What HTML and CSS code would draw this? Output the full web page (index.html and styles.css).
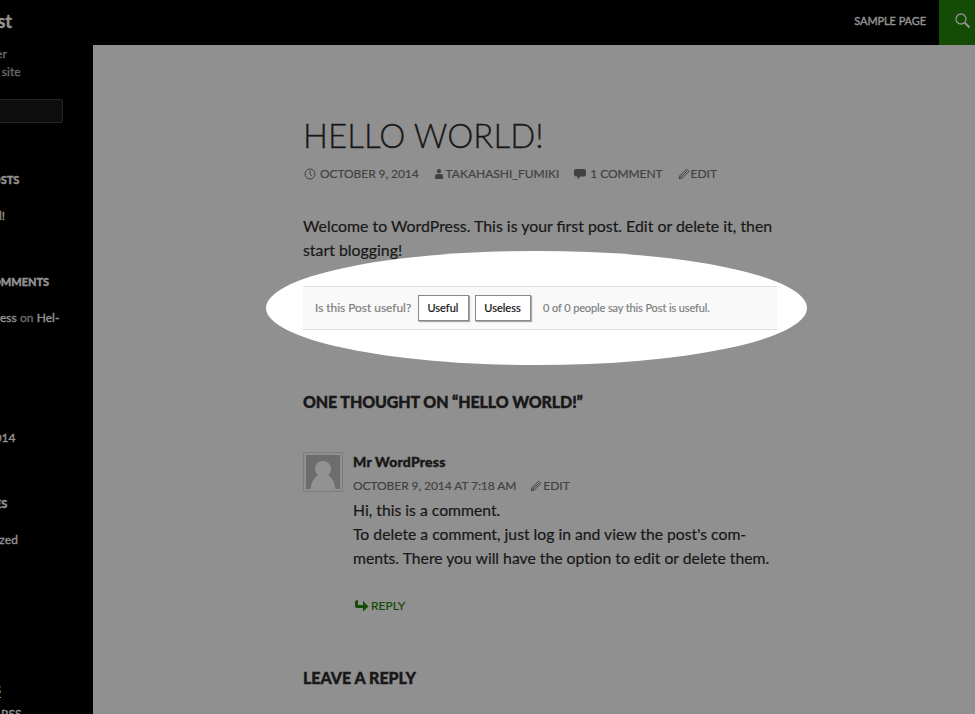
FILE: index.html
```html
<!DOCTYPE html>
<html lang="en">
<head>
<meta charset="utf-8">
<title>Hello world!</title>
<link rel="stylesheet" href="styles.css">
</head>
<body>
<svg class="symbols" aria-hidden="true">
  <symbol id="pencil" viewBox="0 0 12 12"><path d="M1.2 10.8 2 7.7 7.8 1.8q.9-.9 1.8 0l.6.6q.9.9 0 1.8L4.4 10z M2 7.7 4.3 10 M3.5 8.5 8.9 3.1" fill="none" stroke="currentColor" stroke-width="1"/></symbol>
</svg>
<header class="topbar">
  <h1 class="site-title">WP Test</h1>
  <nav class="nav"><a>Sample Page</a></nav>
  <div class="search-toggle"><svg width="16" height="16" viewBox="0 0 16 16"><circle cx="6" cy="6" r="5" fill="none" stroke="currentColor" stroke-width="1.3"/><path d="m9.8 9.8 4.7 4.7" stroke="currentColor" stroke-width="2.1"/></svg></div>
</header>
<div class="page">
  <aside class="sidebar">
    <p class="tagline">Just another WordPress site</p>
    <div class="searchbox"></div>
    <section class="widget posts"><h2>Recent Posts</h2><p>Hello world!</p></section>
    <section class="widget comments"><h2>Recent Comments</h2><p>Mr WordPress <span>on</span> Hel-</p></section>
    <section class="widget archives"><p>October 2014</p></section>
    <section class="widget categories"><h2>Categories</h2><p>Uncategorized</p></section>
    <section class="widget feeds"><p>Entries <abbr>RSS</abbr></p><p>Comments <abbr>RSS</abbr></p></section>
  </aside>
  <main class="content">
    <div class="spotlight"></div>
    <article class="post">
      <h1 class="title">Hello world!</h1>
      <div class="meta">
        <span class="date"><svg width="12" height="12" viewBox="0 0 12 12"><circle cx="6" cy="6" r="5" fill="none" stroke="currentColor"/><path d="M6 2.5V6l2 2" fill="none" stroke="currentColor"/></svg>October 9, 2014</span>
        <span class="author"><svg width="8" height="10" viewBox="0 0 8 10"><circle cx="4" cy="2.2" r="2.1" fill="currentColor"/><path d="M0 10V7.2Q0 5 2 5h4q2 0 2 2.2V10z" fill="currentColor"/></svg>takahashi_fumiki</span>
        <span class="count"><svg width="12" height="11" viewBox="0 0 12 11"><path d="M2 0h8q2 0 2 2v3.5q0 2-2 2H6.5L3.5 10.5v-3H2q-2 0-2-2V2q0-2 2-2z" fill="currentColor"/></svg>1 Comment</span>
        <span class="edit"><svg width="12" height="12"><use href="#pencil"/></svg>Edit</span>
      </div>
      <p class="body">Welcome to WordPress. This is your first post. Edit or delete it, then<br>start blogging!</p>
      <div class="feedback">
        <span class="question">Is this Post useful?</span>
        <button>Useful</button><button>Useless</button>
        <span class="result">0 of 0 people say this Post is useful.</span>
      </div>
    </article>
    <section class="discussion">
      <h2>One thought on “Hello world!”</h2>
      <div class="comment">
        <div class="avatar"><svg width="34" height="34" viewBox="0 0 34 34"><rect width="34" height="34" fill="#6d6d6d"/><circle cx="17" cy="14" r="8" fill="#929292"/><path d="M4.5 34C5.5 26 9 21 13 20h8c4 1 7.5 6 8.5 14z" fill="#929292"/></svg></div>
        <div class="comment-main">
          <div class="name">Mr WordPress</div>
          <div class="meta comment-meta"><span>October 9, 2014 at 7:18 am</span><span class="edit"><svg width="12" height="12"><use href="#pencil"/></svg>Edit</span></div>
          <p class="comment-text">Hi, this is a comment.<br>To delete a comment, just log in and view the post's com-<br>ments. There you will have the option to edit or delete them.</p>
          <div class="reply"><svg width="14" height="12" viewBox="0 0 14 12"><path d="M0 1 3 0v5h5V1l5.5 5.5L8 11.5V8H2Q0 8 0 6z" fill="currentColor"/></svg>Reply</div>
        </div>
      </div>
      <h2 class="respond">Leave a Reply</h2>
    </section>
  </main>
</div>
</body>
</html>
```
FILE: styles.css
```css
* { box-sizing: border-box; }
html, body { height: 100%; overflow: hidden; }
body { margin: 0; background: #000; font-family: Lato, sans-serif; color: #181818; -webkit-text-stroke: .2px; }
h1, h2, p { margin: 0; }
svg { display: block; flex: none; }
.symbols { display: none; }
.topbar { height: 45px; display: flex; align-items: center; color: #929292; }
.site-title { width: 101px; margin-left: -89px; margin-top: -3px; font-size: 18px; line-height: 24px; font-weight: 700; text-align: right; white-space: nowrap; -webkit-text-stroke: .4px; }
.nav { margin-left: auto; margin-right: 13px; font-size: 11px; letter-spacing: -.08px; text-transform: uppercase; margin-top: -4px; -webkit-text-stroke: .4px; }
.search-toggle { width: 36px; height: 45px; background: #144b05; padding: 13px 0 0 16px; }
.page { display: flex; height: 669px; }
.sidebar { width: 182px; margin-left: -89px; padding: 0 30px; flex: none; color: #929292; font-size: 12px; line-height: 18px; white-space: nowrap; }
.tagline { color: #686868; white-space: normal; letter-spacing: .05px; -webkit-text-stroke: .4px; }
.searchbox { margin-top: 18px; height: 24px; border: 1px solid #252525; border-radius: 2px; background: #0e0e0e; }
.widget h2 { font-size: 11px; line-height: 18px; font-weight: 900; letter-spacing: -.05px; text-transform: uppercase; margin-bottom: 18px; -webkit-text-stroke: .4px; }
.widget p { line-height: 18px; -webkit-text-stroke: .4px; }
.widget span { color: #686868; }
.posts { margin-top: 48px; }
.comments { margin-top: 48px; }
.comments p { letter-spacing: .04px; }
.archives { margin-top: 102px; }
.categories { margin-top: 48px; }
.categories p { letter-spacing: .06px; }
.feeds { margin-top: 132px; }
.feeds p + p { margin-top: 6px; }
abbr { border-bottom: 1px dotted #929292; }
.content { position: relative; flex: 1; background: #909090; padding: 72px 0 0 210px; overflow: hidden; }
.spotlight { position: absolute; left: 173px; top: 206px; width: 541px; height: 114px; border-radius: 50%; background: #fff; }
.post, .discussion { position: relative; width: 474px; }
.title { font-size: 33px; line-height: 36px; font-weight: 300; text-transform: uppercase; -webkit-text-stroke: .3px; letter-spacing: .05px; }
.meta { display: flex; align-items: center; margin-top: 12px; font-size: 12px; line-height: 18px; letter-spacing: -.08px; text-transform: uppercase; color: #424242; white-space: nowrap; }
.meta span { display: flex; align-items: center; }
.date { padding-left: 1px; gap: 4px; }
.meta .author { margin-left: 16px; gap: 3px; letter-spacing: 0; }
.count { margin-left: 15px; gap: 4px; }
.edit { margin-left: 15px; gap: 1px; letter-spacing: 0; }
.body { margin-top: 31px; font-size: 15.86px; line-height: 24px; white-space: nowrap; }
.feedback { margin-top: 24px; height: 44px; border: 1px solid #ddd; border-width: 1px 0; background: #f9f9f9; display: flex; align-items: center; padding: 0 0 1px 12px; color: #808080; font-size: 11.9px; white-space: nowrap; }
.question { width: 103px; }
button { height: 26px; width: 51px; margin: 0 6px 0 0; padding: 0 1px 0 0; border: 1px solid #888; border-radius: 0; background: #fff; box-shadow: 1px 1px 1px #aaa; font: 11px Lato, sans-serif; color: #111; }
button + button { width: 56px; margin-right: 12px; }
.result { font-size: 11px; letter-spacing: -.12px; }
.discussion { margin-top: 60px; }
.discussion h2 { font-size: 16px; line-height: 24px; font-weight: 900; letter-spacing: -.12px; text-transform: uppercase; -webkit-text-stroke: .4px; }
.discussion .respond { letter-spacing: 0; }
.comment { display: flex; margin: 36px 0 48px; gap: 10px; }
.avatar { width: 40px; height: 40px; margin-top: 2px; padding: 2px; border: 1px solid #7c7c7c; flex: none; }
.name { font-size: 14px; line-height: 24px; font-weight: 900; letter-spacing: .2px; -webkit-text-stroke: .4px; }
.comment-meta { margin-top: 0; line-height: 24px; }
.comment-meta .edit { margin-left: 14px; }
.comment-text { font-size: 15.74px; line-height: 24px; white-space: nowrap; font-variant-ligatures: none; }
.reply { display: flex; align-items: center; gap: 2px; margin-top: 24px; padding-left: 2px; font-size: 12px; line-height: 24px; text-transform: uppercase; color: #144b05; }
```
